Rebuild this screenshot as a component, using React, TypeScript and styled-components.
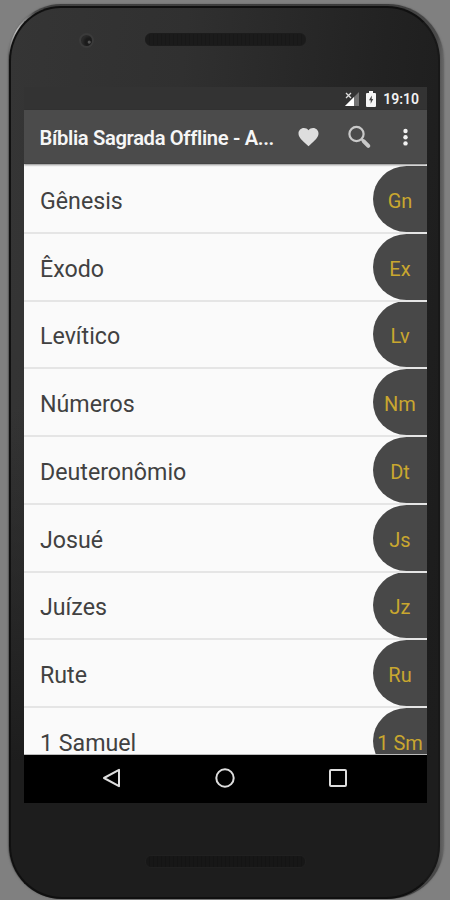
import React from 'react';
import styled, { createGlobalStyle } from 'styled-components';

const GlobalStyle = createGlobalStyle`
  * { box-sizing: border-box; }
  html, body { margin: 0; padding: 0; }
  body {
    background: #808080;
    font-family: Roboto, "Liberation Sans", sans-serif;
    overflow: hidden;
  }
`;

const Stage = styled.div`
  width: 450px;
  height: 900px;
  padding: 4px 6px 1px 8px;
  background: #808080;
  overflow: hidden;
`;

const Phone = styled.div`
  width: 436px;
  height: 895px;
  border-radius: 53px 56px 56px 54px / 56px 56px 54px 54px;
  padding: 2px 4px 0 1px;
  background:
    radial-gradient(circle at 8px 26px, #c0c0c0 0, rgba(160, 160, 160, 0) 26px),
    linear-gradient(90deg, #5c5c5c 0%, #404040 10%, #3a3a3a 85%, #4a4a4a 98.5%, #6a6a6a 100%);
  box-shadow: 0 0 2px #606060;
`;

const Body = styled.div`
  height: 100%;
  display: flex;
  flex-direction: column;
  border: 2px solid #101010;
  border-right-color: #181818;
  border-radius: 52px 53px 54px 53px / 55px 54px 53px 53px;
  padding: 0 13px;
  background:
    linear-gradient(180deg, transparent 0%, transparent 45%, #1d1d1d 85%),
    linear-gradient(95deg, #353535 0%, #303030 35%, #222 75%, #1b1b1b 100%);
`;

const TopBezel = styled.div`
  height: 79px;
  flex: none;
  display: grid;
  grid-template-columns: 121px 161px 1fr;
  padding-top: 25px;
  align-items: start;
`;

const Camera = styled.div`
  width: 15px;
  height: 15px;
  margin: 0 0 0 55px;
  border: 2px solid #3b3b3b;
  border-radius: 50%;
  background: radial-gradient(circle at 75% 65%, #555 0 1px, #1b1b1b 2px 4px, #2a2a2a 7px);
`;

const Speaker = styled.div<{ $dim?: boolean }>`
  width: 161px;
  height: 13px;
  border-radius: 6px;
  border: 1px solid ${p => (p.$dim ? '#202020' : '#1c1c1c')};
  background: ${p =>
    p.$dim
      ? 'repeating-linear-gradient(90deg, #171717 0 3px, #141414 3px 4px)'
      : 'repeating-linear-gradient(90deg, #1b1b1b 0 3px, #181818 3px 4px)'};
`;

const Screen = styled.div`
  width: 403px;
  height: 716px;
  flex: none;
  display: flex;
  flex-direction: column;
  overflow: hidden;
`;

const StatusBar = styled.div`
  height: 23px;
  flex: none;
  display: flex;
  align-items: center;
  justify-content: flex-end;
  padding: 1px 8px 0 0;
  background: #333;
  color: #f2f2f2;
  font-size: 14px;
  font-weight: 600;
  line-height: 22px;
`;

const StatusIcon = styled.svg<{ $gap: number }>`
  margin-right: ${p => p.$gap}px;
`;

const AppBar = styled.div`
  height: 54px;
  flex: none;
  display: flex;
  align-items: center;
  padding: 0 0 0 15.5px;
  background: #4b4b4b;
  border-bottom: 1px solid #444;
  z-index: 1;
  box-shadow: 0 1px 2px rgba(0, 0, 0, 0.45);
`;

const Title = styled.h1`
  width: 236px;
  margin: 3px 22.5px 0 0;
  color: #f6f6f6;
  font-size: 20.2px;
  font-weight: 600;
  letter-spacing: -0.35px;
  white-space: nowrap;
`;

const Action = styled.svg<{ $gap: number }>`
  flex: none;
  margin-right: ${p => p.$gap}px;
`;

const List = styled.ul`
  height: 591px;
  margin: 0;
  padding: 2px 0 0;
  list-style: none;
  background: #fafafa;
  overflow: hidden;
  border-bottom: 1px solid #bbb;
`;

const Row = styled.li`
  height: 67.75px;
  display: flex;
  justify-content: space-between;
  align-items: center;
  padding-left: 16px;
  overflow: hidden;
  border-bottom: 2px solid #e5e5e5;
`;

const Name = styled.span`
  margin-top: 4px;
  color: #414141;
  font-size: 23.2px;
  font-weight: 400;
  line-height: 26px;
  white-space: nowrap;
`;

const Badge = styled.span`
  flex: none;
  width: 67px;
  height: 66px;
  margin-right: -13px;
  padding: 4px 13px 0 0;
  display: flex;
  align-items: center;
  justify-content: center;
  border-radius: 50% 0 0 50%;
  background: #484848;
  color: #c9a72f;
  font-size: 20px;
  font-weight: 450;
  line-height: 24px;
  white-space: nowrap;
`;

const NavBar = styled.div`
  height: 48px;
  flex: none;
  display: flex;
  justify-content: center;
  align-items: center;
  gap: 89px;
  background: #000;
  padding: 0 1px 2px 0;
`;

const BottomBezel = styled.div`
  flex: 1;
  display: flex;
  align-items: flex-start;
  padding: 52px 0 0 121px;
`;

const books = [
  ['Gênesis', 'Gn'],
  ['Êxodo', 'Ex'],
  ['Levítico', 'Lv'],
  ['Números', 'Nm'],
  ['Deuteronômio', 'Dt'],
  ['Josué', 'Js'],
  ['Juízes', 'Jz'],
  ['Rute', 'Ru'],
  ['1 Samuel', '1 Sm'],
];

export default function App() {
  return (
    <Stage>
      <GlobalStyle />
      <Phone>
        <Body>
          <TopBezel>
            <Camera />
            <Speaker />
          </TopBezel>
          <Screen>
            <StatusBar>
              <StatusIcon $gap={7} width="14" height="14" viewBox="0 0 14 14">
                <path d="M14 0V14H0Z" fill="#737373" />
                <path d="M9 5V14H0Z" fill="#fff" />
                <path d="M0 0H7V6L4 7H0Z" fill="#333" />
                <path d="M1 1L6 6M6 1L1 6" stroke="#ddd" strokeWidth="1.3" />
              </StatusIcon>
              <StatusIcon $gap={7} width="10" height="16" viewBox="0 0 10 16">
                <path d="M3 0H7V2H9Q10 2 10 3V15Q10 16 9 16H1Q0 16 0 15V3Q0 2 1 2H3Z" fill="#f4f4f4" />
                <path d="M5.8 4.5L3 9.3H4.7V12.8L7.2 8H5.7Z" fill="#444" />
              </StatusIcon>
              19:10
            </StatusBar>
            <AppBar>
              <Title>Bíblia Sagrada Offline - A...</Title>
              <Action $gap={28} width="22" height="20" viewBox="0 0 22 20">
                <path
                  d="M10.5 19.3L9.1 18C4 13.4 0.5 10.3 0.5 6.5C0.5 3.4 2.9 1 5.9 1C7.7 1 9.4 1.8 10.5 3.2C11.6 1.8 13.3 1 15.1 1C18.1 1 20.5 3.4 20.5 6.5C20.5 10.3 17 13.4 11.9 18Z"
                  fill="#dedede"
                />
              </Action>
              <Action $gap={31} width="24" height="24" viewBox="0 0 24 24" fill="none" stroke="#c9c9c9">
                <circle cx="8.5" cy="9" r="7.1" strokeWidth="2.2" />
                <path d="M13.5 14L15.8 16.3" strokeWidth="2.5" />
                <path d="M15.8 16.3L20.3 20.8" strokeWidth="4" strokeLinecap="round" />
              </Action>
              <Action $gap={0} width="6" height="18" viewBox="0 0 6 18" fill="#f2f2f2">
                <circle cx="2.5" cy="3" r="2.2" />
                <circle cx="2.5" cy="9.2" r="2.2" />
                <circle cx="2.5" cy="15.4" r="2.2" />
              </Action>
            </AppBar>
            <List>
              {books.map(([name, abbreviation]) => (
                <Row key={name}>
                  <Name>{name}</Name>
                  <Badge>{abbreviation}</Badge>
                </Row>
              ))}
            </List>
            <NavBar>
              <svg width="24" height="24" viewBox="0 0 24 24" fill="none" stroke="#dedede" strokeWidth="2">
                <path d="M4 12L19 3.8V20.2Z" strokeLinejoin="round" />
              </svg>
              <svg width="24" height="24" viewBox="0 0 24 24" fill="none" stroke="#dedede" strokeWidth="2">
                <circle cx="12" cy="12" r="8.7" />
              </svg>
              <svg width="24" height="24" viewBox="0 0 24 24" fill="none" stroke="#dedede" strokeWidth="2">
                <rect x="4" y="4" width="16" height="16" rx="1" />
              </svg>
            </NavBar>
          </Screen>
          <BottomBezel>
            <Speaker $dim />
          </BottomBezel>
        </Body>
      </Phone>
    </Stage>
  );
}
